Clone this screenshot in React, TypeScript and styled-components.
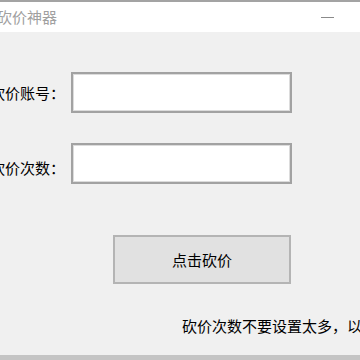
import React from "react";
import styled, { createGlobalStyle } from "styled-components";

const Global = createGlobalStyle`
  html, body { margin: 0; padding: 0; background: #f0f0f0; overflow: hidden; }
  body { font-family: "Noto Sans CJK SC", "Noto Sans", sans-serif; }
`;

const Window = styled.div`
  width: 360px;
  height: 360px;
  display: flex;
  flex-direction: column;
  overflow: hidden;
  background: #f0f0f0;
`;

const TitleBar = styled.div`
  height: 30px;
  border-top: 2px solid #a3a3a3;
  background: #ffffff;
  display: flex;
  align-items: center;
  justify-content: space-between;
  padding-right: 26px;
`;

const Title = styled.span`
  margin-left: -3px;
  font-size: 15px;
  color: #a0a0a0;
  line-height: 20px;
`;

const MinButton = styled.span`
  width: 13px;
  height: 1px;
  background: #8a8a8a;
`;

const Content = styled.div`
  flex: 1;
  display: flex;
  flex-direction: column;
  align-items: flex-start;
  margin-left: -9px;
  padding-top: 40px;
  border-bottom: 5px solid #c4c4c4;
`;

const Form = styled.div`
  display: grid;
  grid-template-columns: 80px 221px;
  grid-auto-rows: 41px;
  row-gap: 30px;
`;

const Label = styled.label<{ $shift?: number }>`
  display: flex;
  align-items: center;
  justify-content: flex-end;
  padding-right: 6px;
  padding-top: ${(p) => p.$shift ?? 0}px;
  font-size: 15px;
  color: #000;
  white-space: nowrap;
`;

const Input = styled.input`
  box-sizing: border-box;
  width: 221px;
  height: 41px;
  margin: 0;
  border: 2px solid #a2a2a2;
  box-shadow: inset 0 0 0 1px #dcdcdc;
  background: #fff;
  outline: none;
`;

const Button = styled.button`
  box-sizing: border-box;
  margin-top: 51px;
  margin-left: 122px;
  width: 178px;
  height: 49px;
  border: 2px solid #b4b4b4;
  background: #e1e1e1;
  font-family: inherit;
  font-size: 15px;
  color: #000;
  padding: 0;
`;

const Note = styled.div`
  margin-top: 32px;
  margin-left: 191px;
  font-size: 15px;
  line-height: 20px;
  color: #000;
  white-space: nowrap;
`;

export default function App() {
  return (
    <>
      <Global />
      <Window>
        <TitleBar>
          <Title>砍价神器</Title>
          <MinButton />
        </TitleBar>
        <Content>
          <Form>
            <Label>砍价账号：</Label>
            <Input />
            <Label $shift={8}>砍价次数：</Label>
            <Input />
          </Form>
          <Button>点击砍价</Button>
          <Note>砍价次数不要设置太多，以免被封号</Note>
        </Content>
      </Window>
    </>
  );
}
